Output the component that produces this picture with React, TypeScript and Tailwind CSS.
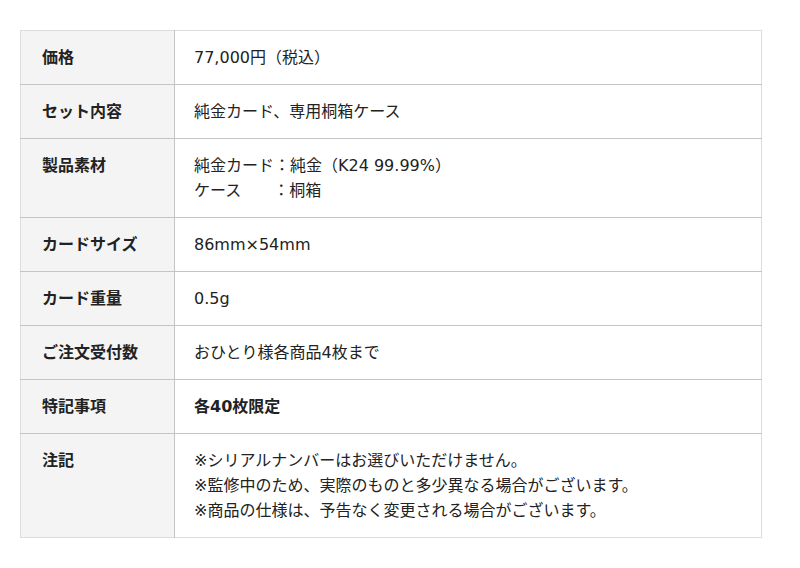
const rows: { label: string; lines: string[]; bold?: boolean }[] = [
  { label: '価格', lines: ['77,000円（税込）'] },
  { label: 'セット内容', lines: ['純金カード、専用桐箱ケース'] },
  { label: '製品素材', lines: ['純金カード：純金（K24 99.99%）', 'ケース　　：桐箱'] },
  { label: 'カードサイズ', lines: ['86mm×54mm'] },
  { label: 'カード重量', lines: ['0.5g'] },
  { label: 'ご注文受付数', lines: ['おひとり様各商品4枚まで'] },
  { label: '特記事項', lines: ['各40枚限定'], bold: true },
  {
    label: '注記',
    lines: [
      '※シリアルナンバーはお選びいただけません。',
      '※監修中のため、実際のものと多少異なる場合がございます。',
      '※商品の仕様は、予告なく変更される場合がございます。',
    ],
  },
];

const App = () => {
  return (
    <div
      className="w-[800px] h-[568px] bg-white pt-[30px] pl-[20px] text-[16px] leading-[25px] text-[#222]"
      style={{ fontFamily: '"DejaVu Sans", "Noto Sans CJK JP", sans-serif' }}
    >
      <table className="w-[742px] border-collapse border border-[#dcdcdc]">
        <tbody>
          {rows.map((row, i) => (
            <tr key={row.label} className={i < rows.length - 1 ? 'border-b border-[#c4c4c4]' : ''}>
              <th className="w-[154px] bg-[#f4f4f4] border-r border-[#c4c4c4] text-left align-top font-bold pl-[21px] py-[14px]">
                {row.label}
              </th>
              <td className={`align-top pl-[19px] py-[14px] ${row.bold ? 'font-bold' : 'font-normal'}`}>
                {row.lines.map((line) => (
                  <div key={line}>{line}</div>
                ))}
              </td>
            </tr>
          ))}
        </tbody>
      </table>
    </div>
  );
};

export default App;
